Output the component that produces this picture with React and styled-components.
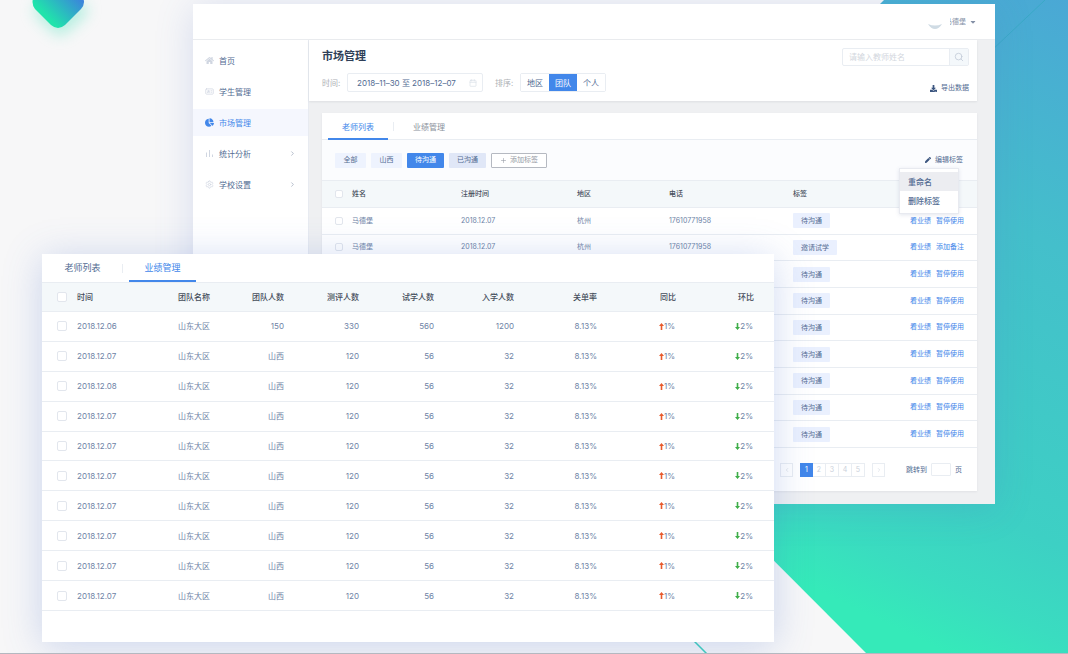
import React from 'react';
import styled, { createGlobalStyle, css } from 'styled-components';
import { FaHome, FaChartPie, FaDownload, FaPen, FaCaretDown } from 'react-icons/fa';
import { Search, ChevronRight, ChevronLeft, Calendar, Settings, IdCard, Plus } from 'lucide-react';

const colors = {
  primary: '#4287ea',
  text: '#526b92',
  muted: '#6e83a6',
  dark: '#2f3f58',
  head: '#454d5a',
  label: '#adb0b5',
  pale: '#d0d6e1',
  line: '#e9edf2',
  tag: '#eaf0fe',
  tableHead: '#f4f8fa',
};

const GlobalStyle = createGlobalStyle`
  *, *::before, *::after { box-sizing: border-box; }
  body {
    margin: 0;
    background: #f7f7f8;
    color: ${colors.text};
    font-family: Inter, 'Noto Sans CJK SC', sans-serif;
    font-size: 8px;
    line-height: 12px;
  }
  button, input {
    margin: 0;
    padding: 0;
    border: 0;
    background: none;
    color: inherit;
    font: inherit;
  }
  a { color: inherit; text-decoration: none; }
  h1, ul { margin: 0; padding: 0; list-style: none; }
  svg { display: block; flex-shrink: 0; }
`;

const Stage = styled.div`
  position: relative;
  display: grid;
  align-items: start;
  min-height: 100vh;
  overflow: hidden;
  border-bottom: 1px solid #b4b8c0;
`;

const Backdrop = styled.svg`
  position: absolute;
  inset: 0;
  width: 100%;
  height: 100%;
`;

const LogoMark = styled.svg`
  position: absolute;
  top: 0;
  left: 0;
`;

const BackWindow = styled.div`
  grid-area: 1 / 1;
  position: relative;
  margin: 4px 73px 0 193px;
  background: #fff;
  box-shadow: 0 4px 36px rgba(84, 116, 200, 0.2);
`;

const FrontWindow = styled.section`
  grid-area: 1 / 1;
  position: relative;
  margin: 254px 294px 11px 42px;
  padding-bottom: 31px;
  background: #fff;
  box-shadow: 0 4px 36px rgba(74, 112, 205, 0.26);
`;

const TopBar = styled.header`
  display: flex;
  align-items: center;
  justify-content: flex-end;
  height: 36px;
  padding-right: 18px;
  border-bottom: 1px solid #eaecef;
`;

const UserButton = styled.button`
  display: flex;
  align-items: center;
  gap: 3px;
  color: #8490a6;
  font-size: 7px;
`;

const Avatar = styled.svg`
  margin: 7px 4px 0 0;
`;

const UserName = styled.span`
  display: flex;
  justify-content: flex-end;
  width: 16px;
  overflow: hidden;
  white-space: nowrap;
`;

const Body = styled.div`
  display: grid;
  grid-template-columns: 116px 1fr;
`;

const Sidebar = styled.nav`
  display: flex;
  flex-direction: column;
  gap: 4px;
  padding-top: 7px;
  border-right: 1px solid #e8ebf1;
`;

const NavItem = styled.a`
  display: flex;
  align-items: center;
  gap: 5px;
  height: 27px;
  padding: 0 12px;
  background: ${props => (props.$active ? '#f5f7fe' : 'transparent')};
  color: ${props => (props.$active ? colors.primary : colors.text)};

  svg:first-child {
    color: ${props => (props.$active ? colors.primary : colors.pale)};
  }

  span {
    flex: 1;
  }
`;

const Main = styled.main`
  padding: 0 18px 13px 0;
  background: #eff0f2;
`;

const FilterPanel = styled.section`
  display: flex;
  justify-content: space-between;
  padding: 8px 8px 7px 13px;
  background: #fff;
  box-shadow: 0 1px 2px rgba(60, 70, 90, 0.1);
`;

const PanelSide = styled.div`
  display: flex;
  flex-direction: column;
  align-items: ${props => (props.$end ? 'flex-end' : 'flex-start')};
  gap: ${props => (props.$end ? '16px' : '9px')};
`;

const Title = styled.h1`
  color: ${colors.dark};
  font-size: 11px;
  font-weight: 700;
  line-height: 16px;
`;

const FilterRow = styled.div`
  display: flex;
  align-items: center;
  gap: 6px;
`;

const Label = styled.label`
  width: 19px;
  color: ${colors.label};
  white-space: nowrap;
`;

const DateBox = styled.div`
  display: flex;
  align-items: center;
  width: 136px;
  height: 19px;
  margin-right: 6px;
  padding: 0 5px 0 9px;
  border: 1px solid ${colors.line};
  border-radius: 2px;

  input {
    flex: 1;
    min-width: 0;
  }
  svg {
    color: #dadfe7;
  }
`;

const Segmented = styled.div`
  display: flex;
  border: 1px solid ${colors.line};
  border-radius: 2px;
`;

const Segment = styled.button`
  width: 28px;
  height: 17px;
  background: ${props => (props.$active ? colors.primary : '#fff')};
  color: ${props => (props.$active ? '#fff' : colors.text)};
`;

const SearchBox = styled.form`
  display: flex;
  width: 127px;
  height: 18px;
  border: 1px solid ${colors.line};
  border-radius: 2px;

  input {
    flex: 1;
    min-width: 0;
    padding-left: 6px;
  }
  input::placeholder {
    color: #d3d7de;
    opacity: 1;
  }
  button {
    display: grid;
    place-items: center;
    width: 19px;
    border-left: 1px solid ${colors.line};
    background: #f4f8fb;
    color: #c3cbd8;
  }
`;

const TextButton = styled.button`
  display: flex;
  align-items: center;
  gap: 4px;
  color: ${colors.text};
  font-size: 7px;

  svg {
    color: #3b557f;
  }
`;

const Card = styled.section`
  margin: 12px 0 0 13px;
  background: #fff;
  box-shadow: 0 1px 2px rgba(60, 70, 90, 0.08);
`;

const TabBar = styled.div`
  display: flex;
  align-items: stretch;
  height: ${props => (props.$large ? '29px' : '27px')};
  padding-left: ${props => (props.$large ? '7px' : '6px')};
  border-bottom: 1px solid ${colors.line};
  font-size: ${props => (props.$large ? '9px' : '8px')};
`;

const Tab = styled.button`
  width: ${props => (props.$large ? '67px' : '60px')};
  margin-bottom: ${props => (props.$large ? '0' : '-1px')};
  border-top: 2px solid transparent;
  border-bottom: 2px solid ${props => (props.$active ? colors.primary : 'transparent')};
  color: ${props => (props.$active ? colors.primary : props.$dim ? '#8b919c' : colors.text)};
`;

const TabDivider = styled.span`
  align-self: center;
  width: 1px;
  height: 9px;
  margin: 0 ${props => (props.$large ? '6px' : '5px')};
  background: ${colors.line};
`;

const TagBar = styled.div`
  display: flex;
  align-items: center;
  gap: 5px;
  height: 40px;
  padding: 0 14px 0 13px;
  background: #fbfcfe;
  font-size: 7px;
`;

const tagTones = {
  light: css`background: #eef3fe; color: ${colors.text};`,
  active: css`background: ${colors.primary}; color: #fff;`,
  strong: css`background: #e0e7f7; color: ${colors.text};`,
  outline: css`background: #fff; border: 1px solid #b5b9c1; color: #969ba5;`,
};

const Tag = styled.button`
  display: flex;
  align-items: center;
  justify-content: center;
  gap: 3px;
  min-width: 31px;
  height: 15px;
  padding: 0 8px;
  border-radius: 1px;
  ${props => tagTones[props.$tone]}
`;

const EditAnchor = styled.div`
  position: relative;
  margin-left: auto;
`;

const Menu = styled.ul`
  position: absolute;
  top: 14px;
  right: 4px;
  z-index: 1;
  width: 60px;
  padding: 3px 0;
  border: 1px solid #e8eaf0;
  background: #fff;
  box-shadow: 0 1px 4px rgba(80, 100, 150, 0.16);
  font-size: 8px;
  font-weight: 500;
`;

const MenuItem = styled.button`
  width: 100%;
  height: 19px;
  padding-left: 8px;
  background: ${props => (props.$active ? '#ecedf1' : '#fff')};
  color: ${colors.text};
  text-align: left;
`;

const Table = styled.table`
  width: 100%;
  height: ${props => (props.$large ? '328px' : '268px')};
  table-layout: fixed;
  border-collapse: separate;
  border-spacing: 0;
  font-size: ${props => (props.$large ? '8px' : '7px')};
  white-space: nowrap;

  thead tr {
    height: ${props => (props.$large ? '29px' : '28px')};
    background: ${colors.tableHead};
  }
  th, td {
    padding: 0;
    border-bottom: 1px solid ${colors.line};
    text-align: left;
  }
  th {
    color: ${colors.head};
    font-weight: 500;
  }
  thead th {
    border-top: ${props => (props.$large ? '0' : `1px solid ${colors.line}`)};
  }
  td {
    color: ${colors.muted};
  }
`;

const NumHead = styled.th`
  && { text-align: right; }
`;

const NumCell = styled.td`
  && { text-align: right; }
`;

const CheckCell = styled.td`
  && { padding-left: ${props => (props.$large ? '15px' : '13px')}; }
`;

const CheckBox = styled.input`
  display: block;
  appearance: none;
  width: ${props => (props.$large ? '10px' : '8px')};
  height: ${props => (props.$large ? '10px' : '8px')};
  border: 1px solid #e2e6ed;
  border-radius: 2px;
  background: #fff;
`;

const RowTag = styled.span`
  display: inline-block;
  padding: 0 8px;
  border-radius: 1px;
  background: ${colors.tag};
  color: ${colors.text};
  line-height: 15px;
`;

const Actions = styled.div`
  display: flex;
  justify-content: flex-end;
  gap: 5px;
  padding-right: 13px;
  color: ${colors.primary};
`;

const Trend = styled.span`
  display: flex;
  align-items: center;
  justify-content: flex-end;
  padding-right: 1px;

  svg {
    color: ${props => (props.$up ? '#e85a2c' : '#3fae49')};
  }
`;

const Pager = styled.nav`
  display: flex;
  align-items: center;
  justify-content: flex-end;
  gap: 7px;
  height: 43px;
  padding-right: 15px;
  font-size: 7px;
`;

const PageGroup = styled.div`
  display: flex;
`;

const PageButton = styled.button`
  display: grid;
  place-items: center;
  width: 13px;
  height: 14px;
  border: 1px solid ${props => (props.$active ? colors.primary : colors.line)};
  border-left-width: ${props => (props.$joined ? '0' : '1px')};
  background: ${props => (props.$active ? colors.primary : '#fff')};
  color: ${props => (props.$active ? '#fff' : '#cbd1db')};
`;

const Jump = styled.label`
  display: flex;
  align-items: center;
  gap: 4px;
  margin-left: 14px;

  input {
    width: 20px;
    height: 13px;
    border: 1px solid ${colors.line};
    border-radius: 1px;
  }
`;

const BarsIcon = () => (
  <svg width="9" height="9" viewBox="0 0 9 9" fill="none" stroke="currentColor">
    <path d="M1.5 3.5V8M4.5 1V8M7.5 5.5V8" />
  </svg>
);

const TrendArrow = ({ up }) => (
  <svg width="5" height="7" viewBox="0 0 5 7" fill="currentColor">
    {up ? <path d="M2.5 0L5 3H3.3V7H1.7V3H0Z" /> : <path d="M2.5 7L5 4H3.3V0H1.7V4H0Z" />}
  </svg>
);

const navItems = [
  { label: '首页', icon: <FaHome size={9} /> },
  { label: '学生管理', icon: <IdCard size={9} /> },
  { label: '市场管理', icon: <FaChartPie size={9} />, active: true },
  { label: '统计分析', icon: <BarsIcon />, more: true },
  { label: '学校设置', icon: <Settings size={9} />, more: true },
];

const teachers = [
  { name: '马德堡', date: '2018.12.07', region: '杭州', phone: '17610771958', tag: '待沟通', action: '暂停使用' },
  { name: '马德堡', date: '2018.12.07', region: '杭州', phone: '17610771958', tag: '邀请试学', action: '添加备注' },
  ...Array.from({ length: 7 }, () => ({ tag: '待沟通', action: '暂停使用' })),
];

const teams = Array.from({ length: 10 }, (_, i) => ({
  id: i,
  date: ['2018.12.06', '2018.12.07', '2018.12.08'][i] || '2018.12.07',
  team: '山东大区',
  numbers: i === 0 ? ['150', '330', '560', '1200'] : ['山西', '120', '56', '32'],
  rate: '8.13%',
}));

const teacherCols = [30, 109, 116, 92, 124, 92, 92];
const teamCols = [35, 101, 34, 72, 75, 75, 80, 83, 79, 78, 20];

const Background = () => (
  <>
    <Backdrop viewBox="0 0 1068 654" preserveAspectRatio="xMaxYMin slice" aria-hidden="true">
      <defs>
        <linearGradient id="sea" gradientUnits="userSpaceOnUse" x1="1090" y1="-20" x2="790" y2="600">
          <stop offset="0" stopColor="#4ba5d6" />
          <stop offset="0.37" stopColor="#44bfcb" />
          <stop offset="0.76" stopColor="#3dd0c4" />
          <stop offset="0.88" stopColor="#3adcc0" />
          <stop offset="0.97" stopColor="#35eab9" />
        </linearGradient>
      </defs>
      <path d="M884 0H1068V654H867L549 335Z" fill="url(#sea)" />
      <path d="M1045 0L990 52" stroke="#3aa9c6" fill="none" />
      <path d="M690 637L707 654" stroke="#3fd0bc" strokeWidth="1.5" fill="none" />
    </Backdrop>
    <LogoMark width="130" height="70" viewBox="0 0 130 70" aria-hidden="true">
      <defs>
        <linearGradient id="mark" x1="0" y1="1" x2="1" y2="0">
          <stop offset="0.25" stopColor="#20e3ab" />
          <stop offset="0.75" stopColor="#3b84dc" />
        </linearGradient>
        <filter id="glow" x="-50%" y="-50%" width="200%" height="200%">
          <feGaussianBlur stdDeviation="7" />
        </filter>
      </defs>
      <path d="M34 9Q30 2 34 -5L84 -5Q88 2 83 9L65 25Q58 31 51 25Z" transform="translate(2 8)" fill="#7fe8cc" opacity="0.5" filter="url(#glow)" />
      <path d="M35 9Q30 2 35 -5L51 -21Q58 -27 65 -21L81 -5Q87 2 81 9L65 25Q58 31 51 25Z" fill="url(#mark)" />
    </LogoMark>
  </>
);

const TeacherTable = () => (
  <Table>
    <colgroup>
      {teacherCols.map((w, i) => <col key={i} style={{ width: w }} />)}
    </colgroup>
    <thead>
      <tr>
        <CheckCell as="th"><CheckBox type="checkbox" aria-label="全选" /></CheckCell>
        <th>姓名</th>
        <th>注册时间</th>
        <th>地区</th>
        <th>电话</th>
        <th>标签</th>
        <th />
      </tr>
    </thead>
    <tbody>
      {teachers.map((row, i) => (
        <tr key={i}>
          <CheckCell><CheckBox type="checkbox" aria-label={row.name || '选择'} /></CheckCell>
          <td>{row.name}</td>
          <td>{row.date}</td>
          <td>{row.region}</td>
          <td>{row.phone}</td>
          <td><RowTag>{row.tag}</RowTag></td>
          <td>
            <Actions>
              <a href="#results">看业绩</a>
              <a href="#action">{row.action}</a>
            </Actions>
          </td>
        </tr>
      ))}
    </tbody>
  </Table>
);

const TeamTable = () => (
  <Table $large>
    <colgroup>
      {teamCols.map((w, i) => <col key={i} style={{ width: w }} />)}
    </colgroup>
    <thead>
      <tr>
        <CheckCell as="th" $large><CheckBox $large type="checkbox" aria-label="全选" /></CheckCell>
        <th>时间</th>
        <th>团队名称</th>
        {['团队人数', '测评人数', '试学人数', '入学人数', '关单率', '同比', '环比'].map(name => (
          <NumHead key={name}>{name}</NumHead>
        ))}
        <th />
      </tr>
    </thead>
    <tbody>
      {teams.map(row => (
        <tr key={row.id}>
          <CheckCell $large><CheckBox $large type="checkbox" aria-label={row.date} /></CheckCell>
          <td>{row.date}</td>
          <td>{row.team}</td>
          {row.numbers.map((n, i) => <NumCell key={i}>{n}</NumCell>)}
          <NumCell>{row.rate}</NumCell>
          <NumCell><Trend $up><TrendArrow up />1%</Trend></NumCell>
          <NumCell><Trend><TrendArrow />2%</Trend></NumCell>
          <td />
        </tr>
      ))}
    </tbody>
  </Table>
);

const App = () => (
  <>
    <GlobalStyle />
    <Stage>
      <Background />
      <BackWindow>
        <TopBar>
          <UserButton type="button">
            <Avatar width="16" height="12" viewBox="0 0 16 12">
              <path d="M1 5Q8 8 15 5Q12 10 8 10Q4 10 1 5Z" fill="#cfdbe4" />
            </Avatar>
            <UserName>马德堡</UserName>
            <FaCaretDown size={8} />
          </UserButton>
        </TopBar>
        <Body>
          <Sidebar>
            {navItems.map(item => (
              <NavItem key={item.label} href="#nav" $active={item.active}>
                {item.icon}
                <span>{item.label}</span>
                {item.more && <ChevronRight size={7} color="#8794ab" />}
              </NavItem>
            ))}
          </Sidebar>
          <Main>
            <FilterPanel>
              <PanelSide>
                <Title>市场管理</Title>
                <FilterRow>
                  <Label htmlFor="range">时间:</Label>
                  <DateBox>
                    <input id="range" type="text" defaultValue="2018–11–30 至 2018–12–07" />
                    <Calendar size={8} />
                  </DateBox>
                  <Label as="span">排序:</Label>
                  <Segmented>
                    <Segment type="button">地区</Segment>
                    <Segment type="button" $active>团队</Segment>
                    <Segment type="button">个人</Segment>
                  </Segmented>
                </FilterRow>
              </PanelSide>
              <PanelSide $end>
                <SearchBox>
                  <input type="text" placeholder="请输入教师姓名" aria-label="教师姓名" />
                  <button type="button" aria-label="搜索"><Search size={10} /></button>
                </SearchBox>
                <TextButton type="button"><FaDownload size={7} />导出数据</TextButton>
              </PanelSide>
            </FilterPanel>
            <Card>
              <TabBar>
                <Tab type="button" $active>老师列表</Tab>
                <TabDivider />
                <Tab type="button" $dim>业绩管理</Tab>
              </TabBar>
              <TagBar>
                <Tag type="button" $tone="light">全部</Tag>
                <Tag type="button" $tone="light">山西</Tag>
                <Tag type="button" $tone="active">待沟通</Tag>
                <Tag type="button" $tone="strong">已沟通</Tag>
                <Tag type="button" $tone="outline"><Plus size={7} />添加标签</Tag>
                <EditAnchor>
                  <TextButton type="button"><FaPen size={6} />编辑标签</TextButton>
                  <Menu>
                    <li><MenuItem type="button" $active>重命名</MenuItem></li>
                    <li><MenuItem type="button">删除标签</MenuItem></li>
                  </Menu>
                </EditAnchor>
              </TagBar>
              <TeacherTable />
              <Pager>
                <PageButton type="button" aria-label="上一页"><ChevronLeft size={6} /></PageButton>
                <PageGroup>
                  {[1, 2, 3, 4, 5].map(n => (
                    <PageButton key={n} type="button" $active={n === 1} $joined={n > 1}>{n}</PageButton>
                  ))}
                </PageGroup>
                <PageButton type="button" aria-label="下一页"><ChevronRight size={6} /></PageButton>
                <Jump>跳转到<input type="text" />页</Jump>
              </Pager>
            </Card>
          </Main>
        </Body>
      </BackWindow>
      <FrontWindow>
        <TabBar $large>
          <Tab type="button" $large>老师列表</Tab>
          <TabDivider $large />
          <Tab type="button" $large $active>业绩管理</Tab>
        </TabBar>
        <TeamTable />
      </FrontWindow>
    </Stage>
  </>
);

export default App;
